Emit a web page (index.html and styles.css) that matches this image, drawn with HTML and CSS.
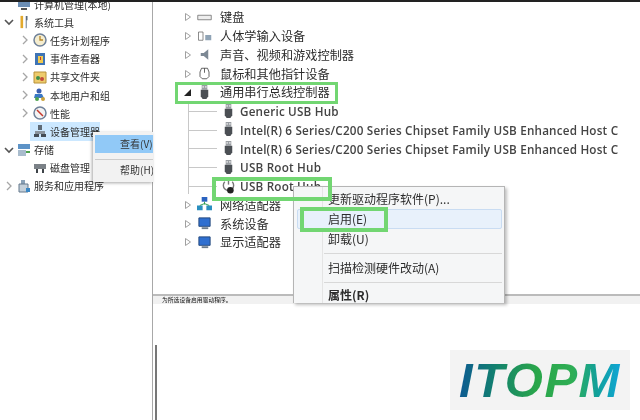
FILE: index.html
```html
<!DOCTYPE html>
<html lang="zh-CN">
<head>
    <meta charset="UTF-8">
    <title>设备管理器</title>
    <link rel="stylesheet" href="styles.css">
</head>
<body>
    <svg class="defs" width="0" height="0">
        <symbol id="usb" viewBox="0 0 12 16">
            <path d="M3 0h6v5H3z" fill="#9a9ea3"/>
            <path d="M2 5h8v7l-2 3H4l-2-3z" fill="#4b4f54"/>
            <path d="M4 1h1v2H4zM7 1h1v2H7z" fill="#fff"/>
        </symbol>
        <symbol id="open" viewBox="0 0 10 10"><path d="M1 3l4 4 4-4" fill="none" stroke="#555" stroke-width="1.6"/></symbol>
        <symbol id="shut" viewBox="0 0 10 10"><path d="M3 1l4 4-4 4" fill="none" stroke="#a6a6a6" stroke-width="1.3"/></symbol>
        <symbol id="tri" viewBox="0 0 8 10"><path d="M1.5 1.5l5 3.500-5 3.500z" fill="#fff" stroke="#a0a0a0"/></symbol>
        <symbol id="net" viewBox="0 0 16 16">
            <path d="M5 0h6v5H5z" fill="#2a63c0"/><path d="M0 9h6v5H0zM10 9h6v5h-6z" fill="#2a8fc0"/>
            <path d="M8 5v3M3 9l5-2 5 2" stroke="#2c9a4c" fill="none"/>
        </symbol>
        <symbol id="screen" viewBox="0 0 16 16">
            <path d="M2 2h12v9H2z" fill="#2f6fd0" stroke="#23477c"/><path d="M5 12h7v2H5z" fill="#6b7b8c"/>
        </symbol>
    </svg>

    <div class="topbar"></div>

    <div class="window">
        <div class="left-pane">
            <ul class="tree">
                <li class="row"><span class="arrow"></span><svg class="ico" viewBox="0 0 14 14"><path d="M1 2h12v8H1z" fill="#6d8fb5"/><path d="M4 11h6v2H4z" fill="#555"/></svg>计算机管理(本地)</li>
                <li class="row"><svg class="arrow"><use href="#open"/></svg><svg class="ico" viewBox="0 0 14 16"><path d="M3 1h3v14H3z" fill="#e2a92c"/><path d="M9 1h2v5h-1v9H9z" fill="#59697a"/></svg>系统工具</li>
                <li class="row sub"><svg class="arrow"><use href="#shut"/></svg><svg class="ico" viewBox="0 0 14 14"><circle cx="7" cy="7" r="6" fill="#f5edcf" stroke="#6f8199" stroke-width="1.500"/><path d="M7 3v4h3" fill="none" stroke="#b5862a" stroke-width="1.300"/></svg>任务计划程序</li>
                <li class="row sub"><svg class="arrow"><use href="#shut"/></svg><svg class="ico" viewBox="0 0 14 14"><path d="M2 1h10v12H2z" fill="#3f74b5"/><path d="M5 4h5v7H5z" fill="#f1c94e"/><path d="M7 5h1v3H7z" fill="#c6392c"/></svg>事件查看器</li>
                <li class="row sub"><svg class="arrow"><use href="#shut"/></svg><svg class="ico" viewBox="0 0 14 14"><path d="M1 2h12v11H1z" fill="#eecb6c" stroke="#b8923a"/><circle cx="5" cy="8" r="2" fill="#3f8f4a"/><circle cx="9" cy="9" r="2" fill="#c24a3a"/></svg>共享文件夹</li>
                <li class="row sub"><svg class="arrow"><use href="#shut"/></svg><svg class="ico" viewBox="0 0 14 14"><circle cx="6" cy="3" r="2.500" fill="#3a5fb0"/><path d="M2 6h7l2 4H1z" fill="#3a78c4"/><circle cx="4" cy="11" r="2" fill="#4da24f"/><circle cx="10" cy="11" r="2" fill="#c9a13a"/></svg>本地用户和组</li>
                <li class="row sub"><svg class="arrow"><use href="#shut"/></svg><svg class="ico" viewBox="0 0 14 14"><circle cx="7" cy="7" r="6" fill="#f3f3f3" stroke="#6f8199" stroke-width="1.500"/><path d="M4 4l6 6" stroke="#c6392c" stroke-width="1.500"/></svg>性能</li>
                <li class="row selected"><svg class="ico" viewBox="0 0 14 14"><path d="M5 1h4v5H5z" fill="#5f6a75"/><path d="M2 7h10v3H2z" fill="#8a949e"/><path d="M1 10h5v3H1zM8 10h5v3H8z" fill="#444c55"/></svg>设备管理器</li>
                <li class="row"><svg class="arrow"><use href="#open"/></svg><svg class="ico" viewBox="0 0 14 14"><path d="M1 1h12v5H1z" fill="#5d93c7"/><path d="M1 7h8v6H1z" fill="#a9bccd"/><path d="M9 8h4v2H9z" fill="#4da24f"/></svg>存储</li>
                <li class="row sub"><span class="arrow"></span><svg class="ico" viewBox="0 0 14 14"><path d="M1 3h12v5H1z" fill="#7b8187"/><path d="M3 8h2v4H3zM9 8h2v4H9z" fill="#3e4348"/></svg>磁盘管理</li>
                <li class="row"><svg class="arrow"><use href="#shut"/></svg><svg class="ico" viewBox="0 0 14 14"><path d="M4 1h4v4H4z" fill="#8aa2b8"/><path d="M2 5h9v8H2z" fill="#c4d0da" stroke="#64788c"/><path d="M9 9h4v4H9z" fill="#3b87c4"/></svg>服务和应用程序</li>
            </ul>
        </div>

        <div class="right-pane">
            <ul class="device-tree">
                <li class="dev"><svg class="tri"><use href="#tri"/></svg><svg class="dev-ico" viewBox="0 0 20 16"><path d="M1 5h18v6H1z" fill="#eee" stroke="#666"/></svg>键盘</li>
                <li class="dev"><svg class="tri"><use href="#tri"/></svg><svg class="dev-ico" viewBox="0 0 20 16"><path d="M2 2h6v11H2z" fill="#fff" stroke="#666"/><path d="M11 6h8v7h-8z" fill="#8fa3b5"/></svg>人体学输入设备</li>
                <li class="dev"><svg class="tri"><use href="#tri"/></svg><svg class="dev-ico" viewBox="0 0 20 16"><path d="M5 6h4l6-5v14l-6-5H5z" fill="#7c8894"/></svg>声音、视频和游戏控制器</li>
                <li class="dev"><svg class="tri"><use href="#tri"/></svg><svg class="dev-ico" viewBox="0 0 20 16"><path d="M6 1h8l2 5v6l-3 3H7l-3-3V6z" fill="#fff" stroke="#333"/><path d="M10 1v6" stroke="#333"/></svg>鼠标和其他指针设备</li>
                <li class="dev"><span class="tri-open"></span><svg class="dev-ico"><use href="#usb"/></svg>通用串行总线控制器</li>
                <li class="dev child"><svg class="dev-ico"><use href="#usb"/></svg>Generic USB Hub</li>
                <li class="dev child"><svg class="dev-ico"><use href="#usb"/></svg>Intel(R) 6 Series/C200 Series Chipset Family USB Enhanced Host C</li>
                <li class="dev child"><svg class="dev-ico"><use href="#usb"/></svg>Intel(R) 6 Series/C200 Series Chipset Family USB Enhanced Host C</li>
                <li class="dev child"><svg class="dev-ico"><use href="#usb"/></svg>USB Root Hub</li>
                <li class="dev child"><svg class="dev-ico" viewBox="0 0 14 16"><path d="M3 3a5.500 5.500 0 1 0 8 0" fill="none" stroke="#777" stroke-width="1.500"/><path d="M7 0v6" stroke="#777" stroke-width="1.500"/><circle cx="9" cy="12" r="3.500" fill="#222"/></svg>USB Root Hub</li>
                <li class="dev"><svg class="tri"><use href="#tri"/></svg><svg class="dev-ico"><use href="#net"/></svg>网络适配器</li>
                <li class="dev"><svg class="tri"><use href="#tri"/></svg><svg class="dev-ico"><use href="#screen"/></svg>系统设备</li>
                <li class="dev"><svg class="tri"><use href="#tri"/></svg><svg class="dev-ico"><use href="#screen"/></svg>显示适配器</li>
            </ul>
            <div class="status-bar">为所选设备启用驱动程序。</div>
        </div>
    </div>

    <div class="edge-line"></div>
    <div class="edge-mark"></div>

    <!-- menus and green marks lie over the tree -->
    <div class="left-menu">
        <div class="left-menu-item active">查看(V)</div>
        <div class="left-menu-sep"></div>
        <div class="left-menu-item">帮助(H)</div>
    </div>

    <div class="context-menu">
        <div class="menu-item">更新驱动程序软件(P)...</div>
        <div class="menu-item hover">启用(E)</div>
        <div class="menu-item">卸载(U)</div>
        <div class="menu-sep"></div>
        <div class="menu-item">扫描检测硬件改动(A)</div>
        <div class="menu-sep"></div>
        <div class="menu-item strong">属性(R)</div>
    </div>

    <div class="mark mark-bus"></div>
    <div class="mark mark-hub"></div>
    <div class="mark mark-enable"></div>

    <div class="logo"><span class="logo-text">ITOPM</span></div>
</body>
</html>
```

FILE: styles.css
```css
* {
    box-sizing: border-box;
}

body {
    margin: 0;
    width: 640px;
    height: 420px;
    overflow: hidden;
    position: relative;
    background-color: #fff;
    color: #333;
    font-family: "Noto Sans CJK SC", sans-serif;
}

ul {
    list-style: none;
    margin: 0;
    padding: 0;
}

.defs {
    position: absolute;
}

.topbar {
    height: 2px;
    background-color: #222;
}

.window {
    display: flex;
    height: 302px;
    filter: blur(0.55px);
}

/* left tree */
.left-pane {
    width: 153px;
    flex: none;
    overflow: hidden;
    padding-left: 4px;
}

.tree {
    margin-top: -7px;
}

.row {
    display: flex;
    align-items: center;
    height: 18.2px;
    font-size: 10px;
    white-space: nowrap;
    color: #2c2c2c;
}

.row.sub {
    padding-left: 16px;
}

.row.selected {
    background-color: #cce8ff;
    margin-left: 26px;
    padding-left: 3px;
    width: 70px;
}

.arrow {
    width: 10px;
    height: 10px;
    flex: none;
    margin-right: 3px;
}

.ico {
    width: 14px;
    height: 14px;
    flex: none;
    margin-right: 3px;
}

/* right tree */
.right-pane {
    flex: 1;
    min-width: 0;
    display: flex;
    flex-direction: column;
}

.device-tree {
    flex: 1;
    overflow: hidden;
    padding: 6px 0 0 31px;
    position: relative;
}

.device-tree::before {
    content: "";
    position: absolute;
    left: 35px;
    top: 100px;
    width: 1px;
    height: 92px;
    background-color: #c8c8c8;
}

.dev {
    display: flex;
    align-items: center;
    height: 18.75px;
    font-size: 12.2px;
    white-space: nowrap;
    color: #2c2c2c;
    position: relative;
}

.dev.child {
    padding-left: 37px;
    font-family: "Open Sans", "Noto Sans CJK SC", sans-serif;
    font-size: 11.7px;
    font-weight: 600;
    letter-spacing: 0.2px;
    color: #444;
}

.dev.child::before {
    content: "";
    position: absolute;
    left: 4px;
    top: 9px;
    width: 29px;
    height: 1px;
    background-color: #c8c8c8;
}

.tri {
    width: 8px;
    height: 10px;
    flex: none;
    margin-right: 5px;
}

.tri-open {
    width: 7px;
    height: 7px;
    flex: none;
    margin-right: 6px;
    background-color: #222;
    clip-path: polygon(100% 0, 100% 100%, 0 100%);
}

.dev-ico {
    width: 15px;
    height: 15px;
    flex: none;
    margin-right: 8px;
}

.dev.child .dev-ico {
    margin-right: 4px;
}

.status-bar {
    height: 10px;
    line-height: 8px;
    padding-left: 9px;
    font-size: 5.8px;
    color: #111;
    overflow: hidden;
    background-color: #f1f1f1;
    border-top: 2px solid #bbb;
}

.edge-line {
    position: absolute;
    left: 152px;
    top: 2px;
    width: 1px;
    height: 418px;
    background-color: #a8a8a8;
}

.edge-mark {
    position: absolute;
    left: 155px;
    top: 345px;
    width: 2px;
    height: 75px;
    background-color: #777;
}

/* menu of the left pane */
.left-menu {
    position: absolute;
    left: 93px;
    top: 132px;
    width: 60px;
    height: 50px;
    padding-top: 3px;
    overflow: hidden;
    background-color: #f2f2f2;
    box-shadow: -1px 1px 3px rgba(0, 0, 0, 0.35);
    font-size: 10px;
    white-space: nowrap;
    filter: blur(0.45px);
}

.left-menu-item {
    height: 18px;
    line-height: 18px;
    padding-left: 25px;
    margin-left: 2px;
}

.left-menu-item.active {
    background-color: #91c9f7;
}

.left-menu-sep {
    height: 1px;
    margin: 6px 0 1px 2px;
    background-color: #ccc;
}

/* device context menu */
.context-menu {
    position: absolute;
    left: 293px;
    top: 186px;
    width: 212px;
    height: 117px;
    overflow: hidden;
    padding: 2px 2px 0 3px;
    background-color: #f5f6f7;
    border: 1px solid #b5b5b5;
    border-bottom: none;
    box-shadow: 2px 2px 3px rgba(0, 0, 0, 0.25);
    font-size: 12px;
    filter: blur(0.45px);
}

.context-menu::before {
    content: "";
    position: absolute;
    left: 28px;
    top: 0;
    width: 1px;
    height: 100%;
    background-color: #e4e4e4;
}

.menu-item {
    position: relative;
    height: 20px;
    line-height: 20px;
    padding-left: 31px;
    color: #2c2c2c;
}

.menu-item.hover {
    background-color: #e8f1fb;
    border: 1px solid #c9dcf2;
    border-radius: 2px;
    line-height: 18px;
    padding-left: 30px;
}

.menu-item.strong {
    height: 16px;
    line-height: 16px;
    font-weight: 700;
}

.menu-sep {
    position: relative;
    height: 1px;
    margin: 4px 0 4px 27px;
    background-color: #d8d8d8;
}

/* green marks */
.mark {
    position: absolute;
    border: 3px solid #72d672;
}

.mark-bus {
    left: 175px;
    top: 82px;
    width: 163px;
    height: 22px;
}

.mark-hub {
    left: 212px;
    top: 177px;
    width: 120px;
    height: 24px;
    border-width: 4px;
}

.mark-enable {
    left: 300px;
    top: 207px;
    width: 88px;
    height: 25px;
    border-width: 4px;
}

/* logo */
.logo {
    position: absolute;
    left: 450px;
    top: 350px;
    width: 180px;
    height: 60px;
    display: flex;
    align-items: center;
    justify-content: center;
    background-color: #f3f3f3;
}

.logo-text {
    font-family: "Liberation Sans", sans-serif;
    font-size: 49px;
    font-weight: 700;
    font-style: italic;
    letter-spacing: 1.5px;
    line-height: 1;
    background-image: linear-gradient(90deg, #0d5a92 0%, #12806f 22%, #2aa64a 48%, #2fae55 70%, #12a09a 85%, #10a6d8 100%);
    -webkit-background-clip: text;
    background-clip: text;
    color: transparent;
}
```
